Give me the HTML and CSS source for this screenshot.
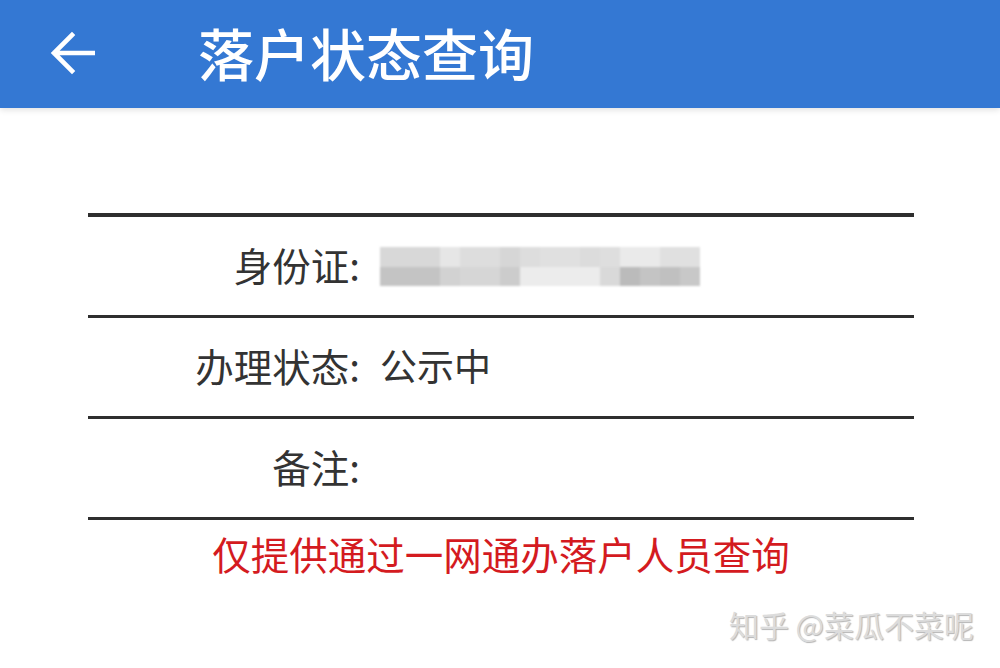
FILE: index.html
```html
<!DOCTYPE html>
<html lang="zh-CN">
<head>
  <meta charset="UTF-8" />
  <meta name="viewport" content="width=device-width, initial-scale=1.0"/>
  <title>落户状态查询</title>
  <link rel="stylesheet" href="styles.css">
</head>
<body>
  <header class="topbar">
    <button class="back-btn" aria-label="返回">
      <svg width="46" height="44" viewBox="0 0 46 44">
        <path d="M44 22H6M23 4L5 22l18 18" fill="none" stroke="#fff" stroke-width="4.6" stroke-linecap="square"/>
      </svg>
    </button>
    <h1 class="title">落户状态查询</h1>
  </header>

  <main class="content">
    <div class="info-table">
      <div class="row">
        <div class="label">身份证:</div>
        <div class="value"><div class="masked"></div></div>
      </div>
      <div class="row">
        <div class="label">办理状态:</div>
        <div class="value">公示中</div>
      </div>
      <div class="row">
        <div class="label">备注:</div>
        <div class="value"></div>
      </div>
    </div>
    <p class="notice">仅提供通过一网通办落户人员查询</p>
  </main>

  <div class="watermark">知乎 @菜瓜不菜呢</div>
</body>
</html>
```

FILE: styles.css
```css
* {
  box-sizing: border-box;
}

body {
  margin: 0;
  background: #fff;
  font-family: "Noto Sans CJK SC", "Noto Sans", sans-serif;
  color: #333;
  width: 1000px;
  height: 668px;
  overflow: hidden;
  position: relative;
}

.topbar {
  height: 108px;
  background: #3478d3;
  display: flex;
  align-items: center;
  box-shadow: 0 2px 6px rgba(0, 0, 0, 0.12);
}

.back-btn {
  margin-left: 49px;
  padding: 0;
  border: none;
  background: none;
  display: flex;
  margin-top: -2px;
}

.title {
  margin: -4px 0 0 103px;
  color: #fff;
  font-size: 56px;
  font-weight: 500;
  line-height: 1;
}

.content {
  padding: 105px 86px 0 88px;
}

.info-table {
  border-top: 4px solid #2e2e2e;
}

.row {
  height: 101px;
  padding-bottom: 4px;
  display: flex;
  align-items: center;
  border-bottom: 3px solid #2e2e2e;
  font-size: 37px;
}

.label {
  width: 272px;
  text-align: right;
  font-size: 38.5px;
}

.value {
  margin-left: 20px;
}

.masked {
  width: 320px;
  height: 39px;
  margin-top: 4px;
  filter: blur(1px);
  background:
    linear-gradient(to right,
      #d8d8d8 0 60px, #e6e6e6 60px 80px, #dddddd 80px 120px, #d6d6d6 120px 140px,
      #dddddd 140px 160px, #e0e0e0 160px 200px, #dcdcdc 200px 220px, #dedede 220px 240px,
      #eaeaea 240px 280px, #e0e0e0 280px 320px) top / 100% 20px no-repeat,
    linear-gradient(to right,
      #c4c4c4 0 60px, #d2d2d2 60px 80px, #d6d6d6 80px 120px, #cccccc 120px 140px,
      #ececec 140px 220px, #d9d9d9 220px 240px, #bbbbbb 240px 260px, #c4c4c4 260px 280px,
      #c0c0c0 280px 300px, #c8c8c8 300px 320px) bottom / 100% 19px no-repeat;
}

.notice {
  margin: 10px 0 0;
  text-align: center;
  color: #d41b1f;
  font-size: 38.5px;
  line-height: 1.2;
}

.watermark {
  position: absolute;
  right: 26px;
  bottom: 22px;
  font-size: 30px;
  color: #dcdcdc;
  text-shadow: 1px 1px 1px #b5b5b5;
}
```
